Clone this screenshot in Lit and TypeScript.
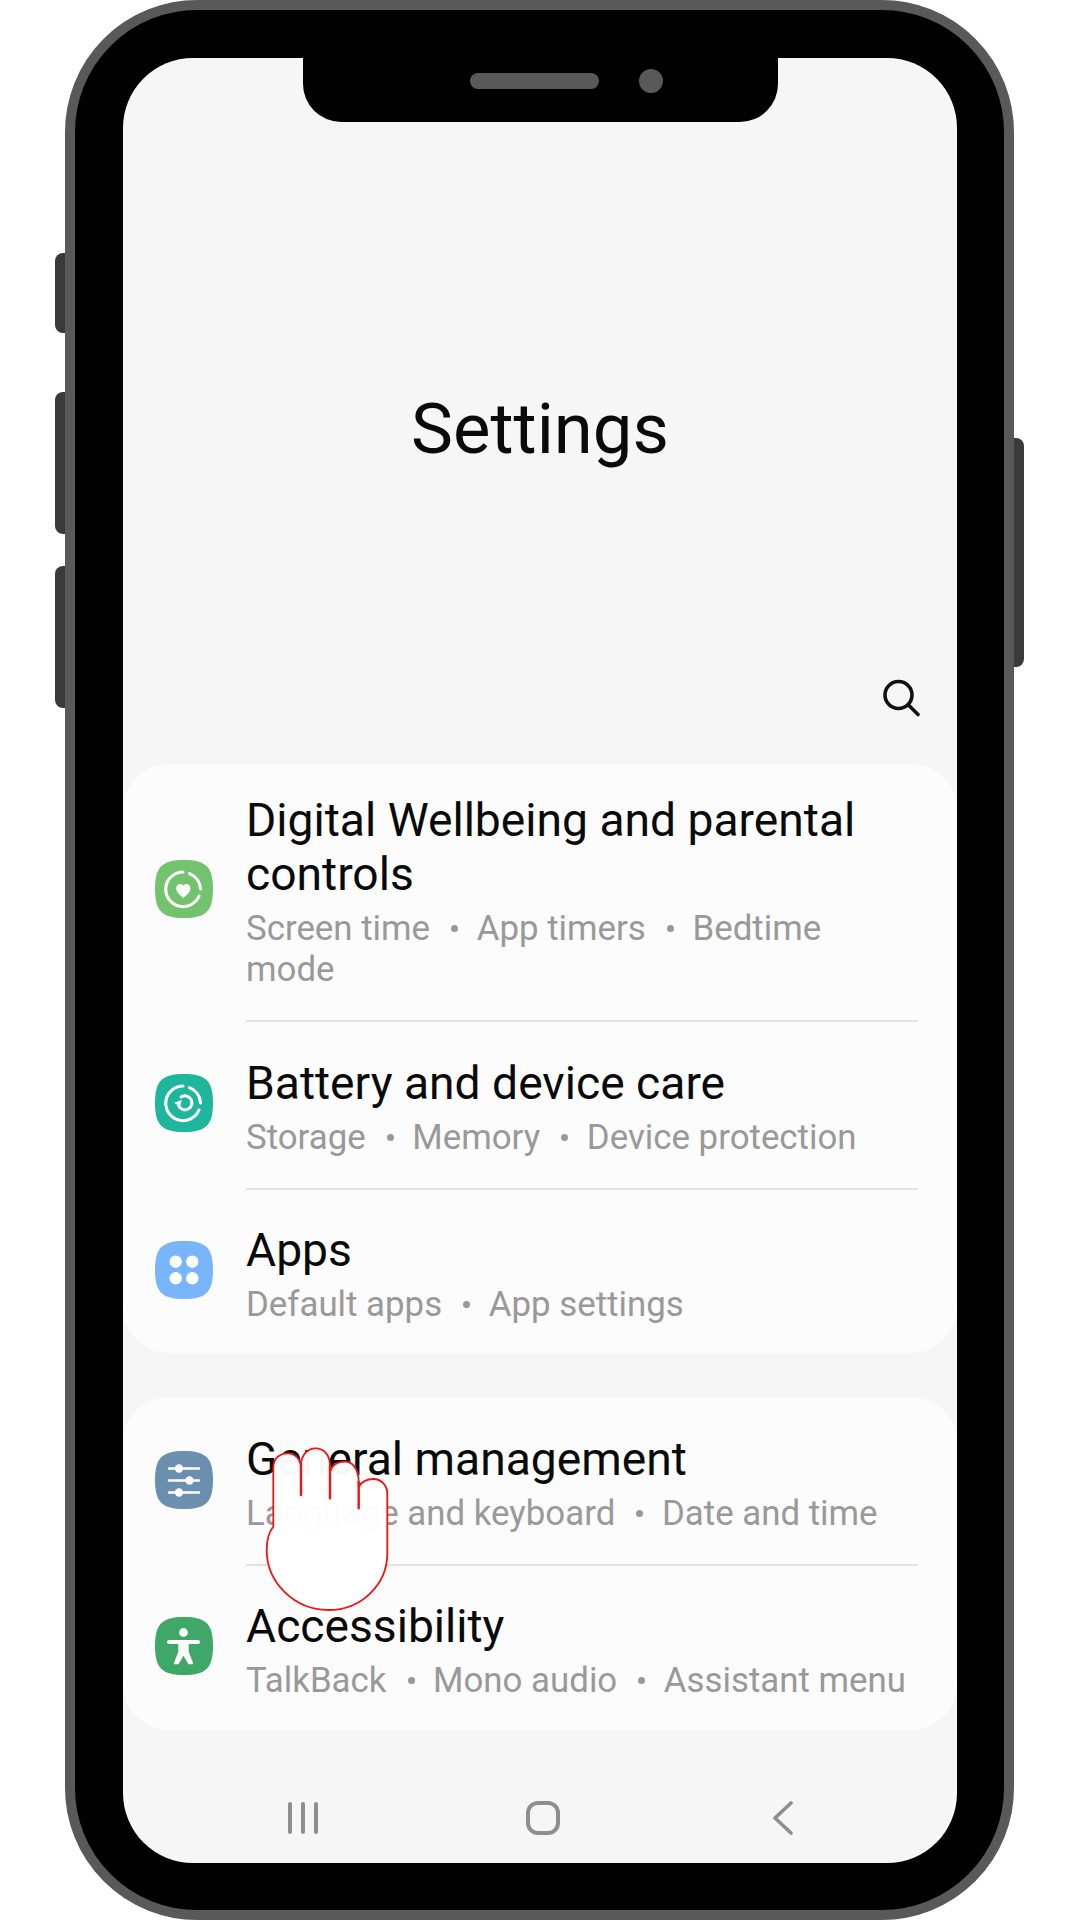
import { LitElement, html, css, svg } from "lit";
import { customElement } from "lit/decorators.js";

const SQUIRCLE = "M29 0C51 0 58 7 58 29C58 51 51 58 29 58C7 58 0 51 0 29C0 7 7 0 29 0Z";

const glyphs: Record<string, unknown> = {
  wellbeing: svg`
    <path d="M28 12A17.3 17.3 0 1 0 44 36" fill="none" stroke="#fff" stroke-width="3.1" stroke-linecap="round"/>
    <path d="M34.5 13.6A17.3 17.3 0 0 1 45.5 29" fill="none" stroke="#fff" stroke-width="3.1" stroke-linecap="round"/>
    <path d="M28.3 38C24.5 34.8 21.2 32 21.2 28.3C21.2 25.6 23.2 24 25.3 24C26.6 24 27.7 24.7 28.3 25.8C28.9 24.7 30 24 31.3 24C33.4 24 35.4 25.6 35.4 28.3C35.4 32 32.1 34.8 28.3 38Z" fill="#fff"/>`,
  battery: svg`
    <path d="M28 12A17.3 17.3 0 1 0 44 36" fill="none" stroke="#fff" stroke-width="3.1" stroke-linecap="round"/>
    <path d="M34.5 13.6A17.3 17.3 0 0 1 45.5 29" fill="none" stroke="#fff" stroke-width="3.1" stroke-linecap="round"/>
    <path d="M23.5 31.5A7 7 0 1 0 26 23" fill="none" stroke="#fff" stroke-width="3" stroke-linecap="round"/>
    <path d="M19.5 27H27.5L24 33Z" fill="#fff" transform="rotate(-20 24 29)"/>`,
  apps: svg`
    <circle cx="20.7" cy="20.7" r="6.2" fill="#fff"/><circle cx="37.3" cy="20.7" r="6.2" fill="#fff"/>
    <circle cx="20.7" cy="37.3" r="6.2" fill="#fff"/><circle cx="37.3" cy="37.3" r="6.2" fill="#fff"/>`,
  general: svg`
    <g stroke="#fff" stroke-width="2.6" stroke-linecap="round">
      <path d="M14 17.5H44M14 29.5H44M14 41.5H44"/>
    </g>
    <circle cx="24" cy="17.5" r="4.2" fill="#fff"/><circle cx="34.5" cy="29.5" r="4.2" fill="#fff"/><circle cx="24" cy="41.5" r="4.2" fill="#fff"/>`,
  access: svg`
    <circle cx="28.5" cy="15.5" r="4.4" fill="#fff"/>
    <path d="M14 25H43" stroke="#fff" stroke-width="4" stroke-linecap="round"/>
    <path d="M24 25H33V35L37.5 46.5H33.8L28.5 37.5L23.2 46.5H19.5L24 35Z" fill="#fff" stroke="#fff" stroke-width="1.4" stroke-linejoin="round"/>`,
};

type Row = { icon: string; color: string; title: string; subs: string[]; cls: string };

const cards: Row[][] = [
  [
    { icon: "wellbeing", color: "#73c26e", title: "Digital Wellbeing and parental controls", subs: ["Screen time", "App timers", "Bedtime mode"], cls: "r1" },
    { icon: "battery", color: "#1eb69c", title: "Battery and device care", subs: ["Storage", "Memory", "Device protection"], cls: "r2" },
    { icon: "apps", color: "#78b5fb", title: "Apps", subs: ["Default apps", "App settings"], cls: "r3" },
  ],
  [
    { icon: "general", color: "#6b8fae", title: "General management", subs: ["Language and keyboard", "Date and time"], cls: "r4" },
    { icon: "access", color: "#3fa767", title: "Accessibility", subs: ["TalkBack", "Mono audio", "Assistant menu"], cls: "r5" },
  ],
];

@customElement("app-root")
export class AppRoot extends LitElement {
  static styles = css`
    :host { display: block; width: 1080px; height: 1920px; background: #fff; overflow: hidden; font-family: Roboto, "Noto Sans", sans-serif; }
    .stage { position: relative; width: 1080px; height: 1920px; padding-left: 65px; box-sizing: border-box; }
    .phone { position: relative; box-sizing: border-box; width: 949px; height: 1920px; background: #000; border: 10px solid #595959; border-radius: 132px; padding: 48px 47px 47px 48px; }
    .btn { position: absolute; width: 12px; background: #3a3a3a; }
    .btn.l { left: 55px; border-radius: 8px 0 0 8px; }
    .btn.r { left: 1012px; border-radius: 0 8px 8px 0; }
    .b1 { top: 253px; height: 80px; } .b2 { top: 392px; height: 142px; } .b3 { top: 566px; height: 142px; } .b4 { top: 438px; height: 229px; }
    .screen { position: relative; width: 100%; height: 100%; background: #f6f6f6; border-radius: 70px; overflow: hidden; display: flex; flex-direction: column; }
    .notch { position: absolute; left: 180px; top: 0; width: 475px; height: 64px; background: #000; border-radius: 0 0 38px 38px; }
    .speaker { position: absolute; left: 167px; top: 15px; width: 129px; height: 16px; border-radius: 8px; background: #595959; }
    .camera { position: absolute; left: 336px; top: 11px; width: 24px; height: 24px; border-radius: 50%; background: #595959; }
    .hero { height: 706px; flex: none; display: flex; flex-direction: column; box-sizing: border-box; padding-top: 331px; }
    h1 { margin: 0; text-align: center; font-weight: 400; font-size: 70.6px; line-height: 80px; color: #0a0a0a; }
    .search { align-self: flex-end; margin: 209px 36px 0 0; width: 40px; height: 40px; display: block; }
    .card { background: #fcfcfc; border-radius: 46px; flex: none; }
    .card + .card { margin-top: 44px; }
    .row { display: flex; align-items: center; box-sizing: border-box; padding: 0 39px 0 32px; position: relative; }
    .r1 { height: 257px; } .r2 { height: 168px; } .r3 { height: 164px; } .r4 { height: 168px; } .r5 { height: 165px; }
    .row + .row::before { content: ""; position: absolute; left: 123px; right: 39px; top: -1px; height: 2px; background: #e3e3e3; }
    .icon { width: 58px; height: 58px; flex: none; margin: 0 33px 3px 0; display: block; }
    .r1 .icon { margin-bottom: 8px; }
    .r2 .icon { margin-bottom: 5px; }
    .text { padding-top: 3px; min-width: 0; }
    .r1 .text { margin-bottom: 6px; }
    .r3 .text, .r5 .text { padding-top: 5px; }
    .title { font-size: 46.2px; line-height: 54px; color: #0a0a0a; }
    .sub { font-size: 34.85px; line-height: 41px; color: #999; margin-top: 7px; }
    .dot { display: inline-block; width: 7px; height: 7px; border-radius: 50%; background: #999; margin: 0 18.5px 0 12.5px; vertical-align: 0.22em; }
    .nav { flex: 1; display: flex; align-items: flex-start; padding-top: 71px; }
    .nav-item { width: 240px; height: 34px; display: flex; justify-content: center; flex: none; }
    .nav-item:first-child { margin-left: 60px; width: 240px; }
    .nav svg { display: block; }
    .hand { position: absolute; left: 262px; top: 1442px; width: 130px; height: 172px; display: block; }
  `;

  render() {
    return html`
      <div class="stage">
        <div class="btn l b1"></div><div class="btn l b2"></div><div class="btn l b3"></div><div class="btn r b4"></div>
        <div class="phone">
          <div class="screen">
            <div class="hero">
              <h1>Settings</h1>
              <svg class="search" viewBox="0 0 40 40" fill="none" stroke="#111" stroke-width="3.6" stroke-linecap="round">
                <circle cx="17.5" cy="17" r="13.5"/><path d="M27.5 27L37 36.5"/>
              </svg>
            </div>
            ${cards.map((c) => html`<div class="card">${c.map((r) => html`
              <div class="row ${r.cls}">
                <svg class="icon" viewBox="0 0 58 58"><path d="${SQUIRCLE}" fill="${r.color}"/>${glyphs[r.icon]}</svg>
                <div class="text">
                  <div class="title">${r.title}</div>
                  <div class="sub">${r.subs.map((s, i) => html`${i ? html`<span class="dot"></span>` : ""}${s} `)}</div>
                </div>
              </div>`)}</div>`)}
            <div class="nav">
              <div class="nav-item">
                <svg width="34" height="34" viewBox="0 0 34 34" stroke="#8e8e8e" stroke-width="4" stroke-linecap="round"><path d="M4 3V31M17 3V31M30 3V31"/></svg>
              </div>
              <div class="nav-item">
                <svg width="36" height="34" viewBox="0 0 36 34" fill="none" stroke="#8e8e8e" stroke-width="4"><rect x="3" y="2" width="30" height="30" rx="10"/></svg>
              </div>
              <div class="nav-item">
                <svg width="24" height="34" viewBox="0 0 24 34" fill="none" stroke="#8e8e8e" stroke-width="3.6" stroke-linecap="round" stroke-linejoin="round"><path d="M20 2L4 17L20 32"/></svg>
              </div>
            </div>
            <div class="notch"><div class="speaker"></div><div class="camera"></div></div>
          </div>
        </div>
        <svg class="hand" viewBox="0 0 130 172" fill="rgba(255,255,255,.97)" stroke="#f01414" stroke-width="1.8" stroke-linecap="round" stroke-linejoin="round">
          <path d="M11.3 84.7V26C11.3 16 18 11.3 25.7 11.3C33 11.3 39 17 39 26V22C40 12 46 6.3 53.7 6.3C61 6.3 68 12 68 24V30C70 23 76 19.7 83 19.7C90 19.7 96.7 26 96.7 40V45C99 40 105 37 111.3 37C119 37 125.3 43 125.3 52V111.3C125.3 143 99 168 66.3 168C33 168 4.7 141 4.7 108C4.7 98 7 90 11.3 84.7Z"/>
          <path stroke-width="2.4" fill="none" d="M39 22V53M68 24V56.3M96.7 40V66.3"/>
        </svg>
      </div>
    `;
  }
}
